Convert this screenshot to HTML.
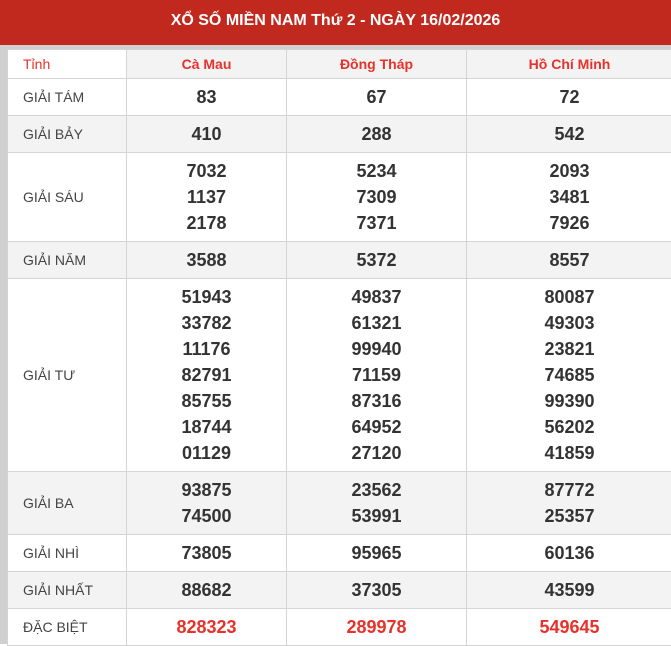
<!DOCTYPE html>
<html><head><meta charset="utf-8"><style>
*{margin:0;padding:0;box-sizing:border-box}
body{width:671px;height:644px;overflow:hidden;background:#fff;font-family:"Liberation Sans",Arial,sans-serif;position:relative}
.hd{position:absolute;left:0;top:0;width:671px;height:45px;background:#c1281e;color:#fff;font-weight:bold;font-size:16px;text-align:center;line-height:42px}
.gb{position:absolute;left:0;top:45px;width:671px;height:4px;background:#d0d0d0}
.gl{position:absolute;left:0;top:45px;width:7px;height:599px;background:#d0d0d0}
table{position:absolute;left:7px;top:49px;border-collapse:collapse;table-layout:fixed;width:665px}
td{border:1px solid #d4d4d4;text-align:center;font-weight:bold;font-size:18px;color:#333;line-height:26px;vertical-align:middle}
td.l{text-align:left;padding-left:15px;font-weight:normal;font-size:14px;color:#444}
tr.g td{background:#f3f3f3}
tr.h td{font-size:14px;color:#e8312a;height:29px;line-height:16px}
tr.h td.l{color:#e8312a;background:#fff}
.r{color:#e8312a !important}
</style></head><body>
<div class="hd">XỔ SỐ MIỀN NAM Thứ 2 - NGÀY 16/02/2026</div>
<div class="gb"></div><div class="gl"></div>
<table>
<colgroup><col style="width:119px"><col style="width:160px"><col style="width:180px"><col style="width:206px"></colgroup>
<tr class="h g"><td class="l">Tỉnh</td><td>Cà Mau</td><td>Đồng Tháp</td><td>Hồ Chí Minh</td></tr>
<tr style="height:37px"><td class="l">GIẢI TÁM</td><td>83</td><td>67</td><td>72</td></tr>
<tr class="g" style="height:37px"><td class="l">GIẢI BẢY</td><td>410</td><td>288</td><td>542</td></tr>
<tr style="height:89px"><td class="l">GIẢI SÁU</td><td>7032<br>1137<br>2178</td><td>5234<br>7309<br>7371</td><td>2093<br>3481<br>7926</td></tr>
<tr class="g" style="height:37px"><td class="l">GIẢI NĂM</td><td>3588</td><td>5372</td><td>8557</td></tr>
<tr style="height:193px"><td class="l">GIẢI TƯ</td><td>51943<br>33782<br>11176<br>82791<br>85755<br>18744<br>01129</td><td>49837<br>61321<br>99940<br>71159<br>87316<br>64952<br>27120</td><td>80087<br>49303<br>23821<br>74685<br>99390<br>56202<br>41859</td></tr>
<tr class="g" style="height:63px"><td class="l">GIẢI BA</td><td>93875<br>74500</td><td>23562<br>53991</td><td>87772<br>25357</td></tr>
<tr style="height:37px"><td class="l">GIẢI NHÌ</td><td>73805</td><td>95965</td><td>60136</td></tr>
<tr class="g" style="height:37px"><td class="l">GIẢI NHẤT</td><td>88682</td><td>37305</td><td>43599</td></tr>
<tr style="height:37px"><td class="l">ĐẶC BIỆT</td><td class="r">828323</td><td class="r">289978</td><td class="r">549645</td></tr>
</table>
</body></html>
